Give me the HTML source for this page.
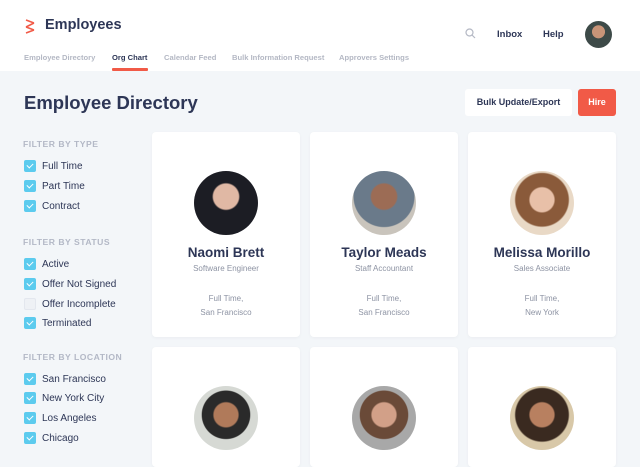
<!DOCTYPE html>
<html><head><meta charset="utf-8"><style>
*{margin:0;padding:0;box-sizing:border-box}
body{width:640px;height:450px;overflow:hidden;background:#f3f6f9;font-family:"Liberation Sans",sans-serif;position:relative;color:#2d3656}
.hdr{position:absolute;left:0;top:0;width:640px;height:71px;background:#fff}
.abs{position:absolute;white-space:nowrap}
.tab{font-size:7.6px;color:#b4b8c4;font-weight:bold;top:53px}
.h{font-size:8.6px;font-weight:bold;color:#b3b8c6;letter-spacing:.5px;left:23px}
.it{font-size:10px;color:#2d3656;left:42px}
.cb{position:absolute;left:24px;width:12px;height:12px;border-radius:2px;background:#5ccbee}
.cb.off{background:#eef1f5;border:1px solid #e3e7ee}
.cb:not(.off)::after{content:"";position:absolute;left:3.5px;top:2px;width:3px;height:5px;border:solid #fff;border-width:0 1.5px 1.5px 0;transform:rotate(45deg)}
.card{position:absolute;width:148px;background:#fff;border-radius:4px;text-align:center;box-shadow:0 1px 3px rgba(0,0,0,.04)}
.av{position:absolute;left:42px;width:64px;height:64px;border-radius:50%}
.nm{position:absolute;left:0;width:100%;top:113px;font-size:13.5px;font-weight:bold;color:#2d3656}
.tt{position:absolute;left:0;width:100%;top:132px;font-size:8px;color:#8d93a3}
.lc{position:absolute;left:0;width:100%;top:160px;font-size:8px;color:#8d93a3;line-height:14px}
</style></head><body>
<div class="hdr"></div>
<svg class="abs" style="left:24px;top:18px" width="12" height="16" viewBox="0 0 12 16"><path d="M2 2l8 3M10 5L2 9M2 9l8 3M10 12l-8 3" fill="none" stroke="#f15a47" stroke-width="1.6"/></svg>
<div class="abs" style="left:45px;top:17px;font-size:14.5px;font-weight:bold;color:#2d3656">Employees</div>
<div class="abs tab" style="left:24px">Employee Directory</div>
<div class="abs tab" style="left:112px;color:#2d3656">Org Chart</div>
<div class="abs" style="left:112px;top:68px;width:36px;height:3px;background:#f15a47;border-radius:1px"></div>
<div class="abs tab" style="left:164px">Calendar Feed</div>
<div class="abs tab" style="left:232px">Bulk Information Request</div>
<div class="abs tab" style="left:339px">Approvers Settings</div>
<svg class="abs" style="left:465px;top:28px" width="11" height="11" viewBox="0 0 11 11"><circle cx="4.5" cy="4.5" r="3.5" fill="none" stroke="#b4b8c4" stroke-width="1.2"/><path d="M7 7l3 3" stroke="#b4b8c4" stroke-width="1.2"/></svg>
<div class="abs" style="left:497px;top:29px;font-size:9.5px;font-weight:bold">Inbox</div>
<div class="abs" style="left:543px;top:29px;font-size:9.5px;font-weight:bold">Help</div>
<div class="abs" style="left:585px;top:21px;width:27px;height:27px;border-radius:50%;background:radial-gradient(circle at 50% 40%,#c89478 0 30%,#3d4a48 32% 100%)"></div>
<div class="abs" style="left:24px;top:92px;font-size:18.5px;font-weight:bold">Employee Directory</div>
<div class="abs" style="left:465px;top:89px;width:107px;height:27px;background:#fff;border-radius:3px;font-size:9px;font-weight:bold;text-align:center;line-height:27px">Bulk Update/Export</div>
<div class="abs" style="left:578px;top:89px;width:38px;height:27px;background:#f15a47;border-radius:3px;font-size:9px;font-weight:bold;color:#fff;text-align:center;line-height:27px">Hire</div>

<div class="abs h" style="top:139px">FILTER BY TYPE</div>
<div class="cb" style="top:160px"></div><div class="abs it" style="top:161px">Full Time</div>
<div class="cb" style="top:180px"></div><div class="abs it" style="top:181px">Part Time</div>
<div class="cb" style="top:200px"></div><div class="abs it" style="top:201px">Contract</div>
<div class="abs h" style="top:237px">FILTER BY STATUS</div>
<div class="cb" style="top:258px"></div><div class="abs it" style="top:259px">Active</div>
<div class="cb" style="top:278px"></div><div class="abs it" style="top:279px">Offer Not Signed</div>
<div class="cb off" style="top:298px"></div><div class="abs it" style="top:299px">Offer Incomplete</div>
<div class="cb" style="top:317px"></div><div class="abs it" style="top:318px">Terminated</div>
<div class="abs h" style="top:352px">FILTER BY LOCATION</div>
<div class="cb" style="top:373px"></div><div class="abs it" style="top:374px">San Francisco</div>
<div class="cb" style="top:392px"></div><div class="abs it" style="top:393px">New York City</div>
<div class="cb" style="top:412px"></div><div class="abs it" style="top:413px">Los Angeles</div>
<div class="cb" style="top:432px"></div><div class="abs it" style="top:433px">Chicago</div>

<div class="card" style="left:152px;top:132px;height:205px"><div class="av" style="top:39px;background:radial-gradient(circle at 50% 40%,#e0b8a4 0 25%,#1c1d24 28% 100%)"></div><div class="nm">Naomi Brett</div><div class="tt">Software Engineer</div><div class="lc">Full Time,<br>San Francisco</div></div>
<div class="card" style="left:310px;top:132px;height:205px"><div class="av" style="top:39px;background:radial-gradient(circle at 50% 40%,#9c6c55 0 25%,#6a7a8a 28% 60%,#c9c4bc 62%)"></div><div class="nm">Taylor Meads</div><div class="tt">Staff Accountant</div><div class="lc">Full Time,<br>San Francisco</div></div>
<div class="card" style="left:468px;top:132px;height:205px"><div class="av" style="top:39px;background:radial-gradient(circle at 50% 45%,#e8c0a8 0 25%,#8a5a3a 28% 55%,#e9d9c6 58%)"></div><div class="nm">Melissa Morillo</div><div class="tt">Sales Associate</div><div class="lc">Full Time,<br>New York</div></div>
<div class="card" style="left:152px;top:347px;height:120px"><div class="av" style="top:39px;background:radial-gradient(circle at 50% 45%,#b07a5a 0 25%,#2a2a2a 28% 50%,#d6d9d4 52%)"></div></div>
<div class="card" style="left:310px;top:347px;height:120px"><div class="av" style="top:39px;background:radial-gradient(circle at 50% 45%,#d2a088 0 25%,#6a4a38 28% 50%,#a8a8a8 52%)"></div></div>
<div class="card" style="left:468px;top:347px;height:120px"><div class="av" style="top:39px;background:radial-gradient(circle at 50% 45%,#b88060 0 25%,#3a2a20 28% 55%,#d8c8a8 58%)"></div></div>
</body></html>
